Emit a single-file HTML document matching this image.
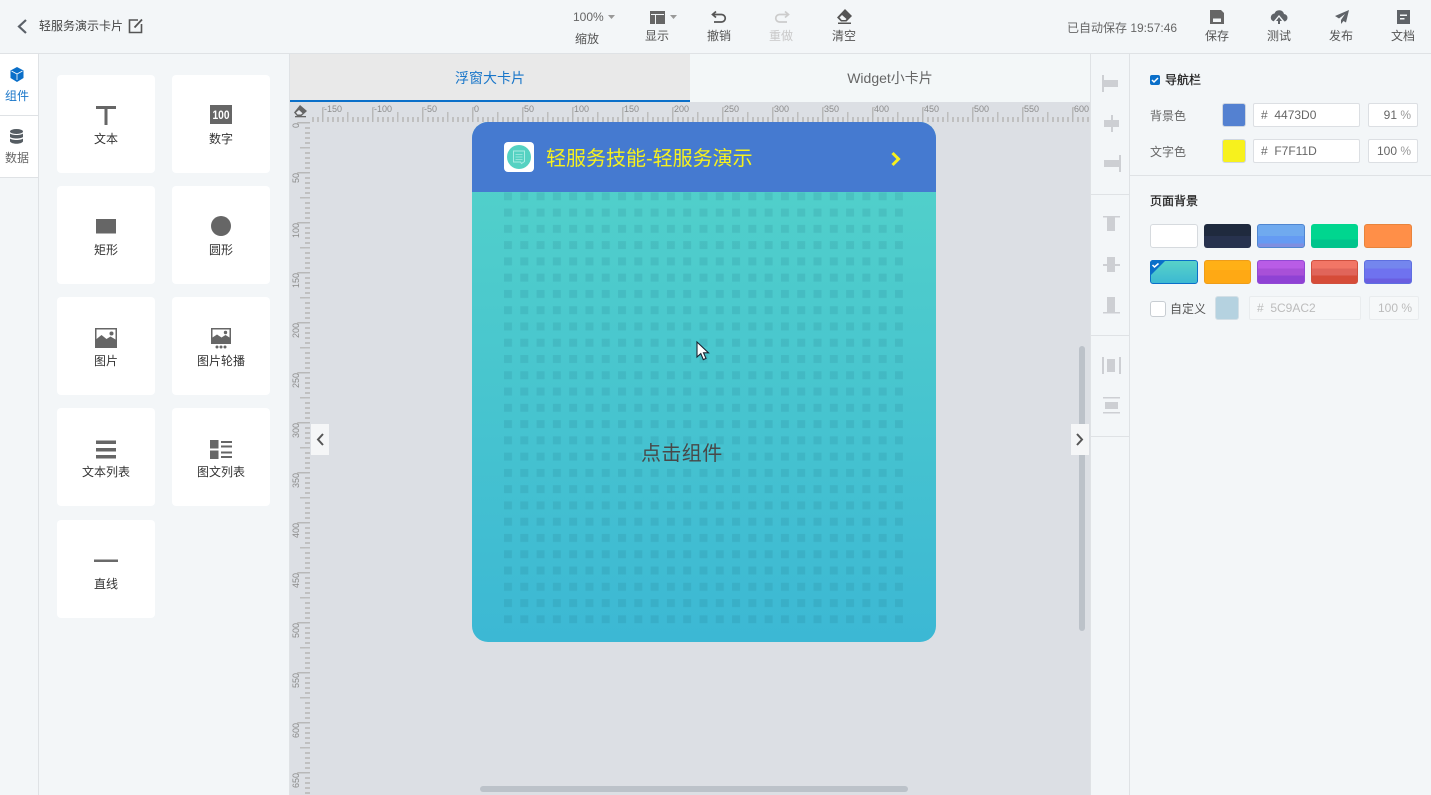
<!DOCTYPE html>
<html lang="zh"><head><meta charset="utf-8"><title>轻服务演示卡片</title>
<style>
*{box-sizing:border-box;margin:0;padding:0}
html,body{width:1431px;height:795px;overflow:hidden;background:#f3f6f8;font-family:"Liberation Sans","Noto Sans CJK SC",sans-serif;font-size:12px;color:#555}
.a{position:absolute}
.t{position:absolute;white-space:nowrap;line-height:16px;font-size:12px}
.c{text-align:center}
svg{position:absolute;overflow:visible}
.card{position:absolute;width:98px;height:98px;background:#fff;border-radius:4px}
.card .t{left:0;width:98px;text-align:center;top:56px;color:#333}
.card svg{left:37px;top:29px}
.box{position:absolute;background:#fff;border:1px solid #dcdfe3;border-radius:2px;height:24px;line-height:22px;font-size:12px;color:#666}
.sw{position:absolute;height:24px;border-radius:3px}
</style></head><body>

<!-- top bar -->
<div class="a" style="left:0;top:0;width:1431px;height:54px;background:#f3f6f8;border-bottom:1px solid #dfe2e5"></div>
<svg style="left:0;top:0" width="40" height="54"><path d="M26 20l-7 6.500 7 6.500" fill="none" stroke="#5a6068" stroke-width="2.200"/></svg>
<div class="t" style="left:39px;top:18px;color:#444">轻服务演示卡片</div>
<svg style="left:128px;top:18px" width="16" height="16"><path d="M10 2H1.500V14.500H13.500V6" fill="none" stroke="#555" stroke-width="1.600"/><path d="M6.500 9.500L14 1.500" stroke="#555" stroke-width="1.800"/></svg>

<div class="t" style="left:573px;top:9px;color:#666">100%</div>
<svg style="left:608px;top:15px" width="7" height="4"><path d="M0 0h7L3.500 4z" fill="#999"/></svg>
<div class="t" style="left:575px;top:31px">缩放</div>
<svg style="left:650px;top:11px" width="15" height="13"><path d="M0 0h15v13H0z" fill="#666"/><path d="M1 3h13v1H1zM5 4h1v9H5z" fill="#f3f6f8"/></svg>
<svg style="left:670px;top:15px" width="7" height="4"><path d="M0 0h7L3.500 4z" fill="#999"/></svg>
<div class="t" style="left:645px;top:28px">显示</div>
<svg style="left:711px;top:10px" width="16" height="15"><path d="M5 1.500L1.500 4.500 5 7.500" fill="none" stroke="#555" stroke-width="1.700"/><path d="M2 4.500H10.500a3.500 3.500 0 0 1 0 7.500H3" fill="none" stroke="#555" stroke-width="1.700"/></svg>
<div class="t" style="left:707px;top:28px">撤销</div>
<svg style="left:774px;top:10px" width="16" height="15"><path d="M11 1.500L14.500 4.500 11 7.500" fill="none" stroke="#ccc" stroke-width="1.700"/><path d="M14 4.500H5.500a3.500 3.500 0 0 0 0 7.500H13" fill="none" stroke="#ccc" stroke-width="1.700"/></svg>
<div class="t" style="left:769px;top:28px;color:#c8c8c8">重做</div>
<svg style="left:836px;top:9px" width="16" height="16"><path d="M9 0L16 7 10.500 12.500H5L1 8.500z" fill="#555"/><path d="M3.500 8.500L6 6l4.500 4-1 1H5.700z" fill="#f3f6f8"/><path d="M2 13.500h13V15H2z" fill="#555"/></svg>
<div class="t" style="left:832px;top:28px">清空</div>

<div class="t" style="left:1067px;top:20px;color:#666">已自动保存 19:57:46</div>
<svg style="left:1210px;top:10px" width="14" height="14"><path d="M0 0h11l3 3v11H0z" fill="#666"/><path d="M3 8.500h8V12H3z" fill="#f3f6f8"/></svg>
<div class="t" style="left:1205px;top:28px">保存</div>
<svg style="left:1271px;top:9px" width="16" height="15"><path d="M4 12.500a4 4 0 0 1-.5-8A5 5 0 0 1 13 5a3.700 3.700 0 0 1-.5 7.500z" fill="#5f6368"/><path d="M8 6l5.500 6.500H2.500z" fill="#f3f6f8"/><path d="M8 8l3 4H9v3H7v-3H5z" fill="#5f6368"/></svg>
<div class="t" style="left:1267px;top:28px">测试</div>
<svg style="left:1334px;top:9px" width="16" height="15"><path d="M15 1L1 7l4 2.500L11 5 7 11v4l2.500-3L12 13.500z" fill="#5f6368"/></svg>
<div class="t" style="left:1329px;top:28px">发布</div>
<svg style="left:1397px;top:10px" width="13" height="14"><path d="M0 0h13v14H0z" fill="#5f6368"/><path d="M3 4.500h7V6H3zM3 8h4.500v1.500H3z" fill="#f3f6f8"/></svg>
<div class="t" style="left:1391px;top:28px">文档</div>

<!-- left nav -->
<div class="a" style="left:0;top:54px;width:38px;height:61px;background:#fff"></div>
<div class="a" style="left:0;top:115px;width:38px;height:1px;background:#dfe2e5"></div>
<div class="a" style="left:0;top:116px;width:38px;height:61px;background:#fff"></div>
<div class="a" style="left:0;top:177px;width:38px;height:1px;background:#dfe2e5"></div>
<div class="a" style="left:38px;top:54px;width:1px;height:741px;background:#dfe2e5"></div>
<svg style="left:10px;top:67px" width="14" height="15"><path d="M7 0l6.500 3.500v7.500L7 15 .5 11V3.500z" fill="#0a6fc9"/><path d="M1.500 4L7 7l5.500-3M7 7v6" fill="none" stroke="#fff" stroke-width=".8"/></svg>
<div class="t" style="left:5px;top:88px;color:#1976c9">组件</div>
<svg style="left:10px;top:129px" width="13" height="15"><ellipse cx="6.500" cy="2.500" rx="6.500" ry="2.500" fill="#555c62"/><path d="M0 4.500c2 2 11 2 13 0V8c-2 2-11 2-13 0zM0 9.500c2 2 11 2 13 0V12.500C11 15.500 2 15.500 0 12.500z" fill="#555c62"/></svg>
<div class="t" style="left:5px;top:150px;color:#666">数据</div>

<!-- component cards -->
<div class="a" style="left:289px;top:54px;width:1px;height:741px;background:#dfe2e5"></div>
<div class="card" style="left:57px;top:75px"><svg width="24" height="24"><path d="M2 2h20v3H13.500V21H10.500V5H2z" fill="#666"/></svg><div class="t">文本</div></div>
<div class="card" style="left:172px;top:75px"><svg width="24" height="24"><path d="M1 1h22v19H1z" fill="#666"/><text x="12" y="15" font-size="12" font-weight="700" fill="#fff" text-anchor="middle" font-family="Liberation Sans Narrow,Liberation Sans,sans-serif" textLength="17" lengthAdjust="spacingAndGlyphs">100</text></svg><div class="t">数字</div></div>
<div class="card" style="left:57px;top:186px"><svg width="24" height="24"><path d="M2 4h20v14.500H2z" fill="#666"/></svg><div class="t">矩形</div></div>
<div class="card" style="left:172px;top:186px"><svg width="24" height="24"><circle cx="12" cy="11" r="10" fill="#666"/></svg><div class="t">圆形</div></div>
<div class="card" style="left:57px;top:297px"><svg width="24" height="24"><path d="M1 2h22v20H1z" fill="#666"/><path d="M2.500 3.500h19v10l-5-3-4 2.500-5-4-5 4z" fill="#fff"/><circle cx="17.500" cy="7.500" r="2" fill="#666"/></svg><div class="t">图片</div></div>
<div class="card" style="left:172px;top:297px"><svg width="24" height="24"><path d="M2 2h20v16H2z" fill="#666"/><path d="M3.500 3.500h17v8l-4-2.500-4 2.500-4.500-3-4.500 3z" fill="#fff"/><circle cx="16.500" cy="6.500" r="1.700" fill="#666"/><circle cx="8" cy="21" r="1.500" fill="#666"/><circle cx="12" cy="21" r="1.500" fill="#666"/><circle cx="16" cy="21" r="1.500" fill="#666"/></svg><div class="t">图片轮播</div></div>
<div class="card" style="left:57px;top:408px"><svg width="24" height="24"><path d="M2 3.500h20V7H2zM2 11h20v3.500H2zM2 18h20v3.500H2z" fill="#666"/></svg><div class="t">文本列表</div></div>
<div class="card" style="left:172px;top:408px"><svg width="24" height="24"><path d="M1 3h8.500v8.500H1zM1 13.500h8.500V22H1z" fill="#666"/><path d="M12 4h11v2H12zM12 8.500h11v2H12zM12 14.500h11v2H12zM12 19h11v2H12z" fill="#666"/></svg><div class="t">图文列表</div></div>
<div class="card" style="left:57px;top:520px"><svg width="24" height="24"><path d="M0 10.500h24v2.500H0z" fill="#6a6a6a"/></svg><div class="t">直线</div></div>

<!-- tabs -->
<div class="a" style="left:290px;top:54px;width:400px;height:46px;background:#e9e9e9"></div>
<div class="a" style="left:690px;top:54px;width:400px;height:48px;background:#f3f7f8"></div>
<div class="a" style="left:290px;top:100px;width:400px;height:2px;background:#0a6fc9"></div>
<div class="t c" style="left:290px;top:70px;width:400px;font-size:14px;color:#1976c9">浮窗大卡片</div>
<div class="t c" style="left:690px;top:70px;width:400px;font-size:14px;color:#666">Widget小卡片</div>

<!-- canvas -->
<div class="a" style="left:290px;top:102px;width:800px;height:693px;background:#dcdfe4"></div>
<svg style="left:290px;top:102px" width="800" height="693">
<defs>
<pattern id="rx" x="182" y="0" width="50" height="20" patternUnits="userSpaceOnUse">
<rect x="0" y="5" width="1.500" height="15" fill="#b8b8b8"/><rect x="0" y="5" width="3" height="1" fill="#c2c2c2"/>
<rect x="25" y="10" width="1.500" height="10" fill="#bdbdbd"/>
<rect x="5" y="15" width="2" height="5" fill="#c0c0c0"/><rect x="10" y="15" width="2" height="5" fill="#c0c0c0"/><rect x="15" y="15" width="2" height="5" fill="#c0c0c0"/><rect x="20" y="15" width="2" height="5" fill="#c0c0c0"/><rect x="30" y="15" width="2" height="5" fill="#c0c0c0"/><rect x="35" y="15" width="2" height="5" fill="#c0c0c0"/><rect x="40" y="15" width="2" height="5" fill="#c0c0c0"/><rect x="45" y="15" width="2" height="5" fill="#c0c0c0"/>
</pattern>
<pattern id="ry" x="0" y="20" width="20" height="50" patternUnits="userSpaceOnUse">
<rect x="7" y="0" width="13" height="1.500" fill="#b8b8b8"/><rect x="7" y="0" width="1" height="3" fill="#c2c2c2"/>
<rect x="10" y="25" width="10" height="1.500" fill="#bdbdbd"/>
<rect x="15" y="5" width="5" height="2" fill="#c0c0c0"/><rect x="15" y="10" width="5" height="2" fill="#c0c0c0"/><rect x="15" y="15" width="5" height="2" fill="#c0c0c0"/><rect x="15" y="20" width="5" height="2" fill="#c0c0c0"/><rect x="15" y="30" width="5" height="2" fill="#c0c0c0"/><rect x="15" y="35" width="5" height="2" fill="#c0c0c0"/><rect x="15" y="40" width="5" height="2" fill="#c0c0c0"/><rect x="15" y="45" width="5" height="2" fill="#c0c0c0"/>
</pattern>
</defs>
<rect x="20" y="0" width="780" height="20" fill="url(#rx)"/>
<rect x="0" y="20" width="20" height="673" fill="url(#ry)"/>
<g font-size="9" fill="#8c8c8c" font-family="Liberation Sans,sans-serif">
<text x="34" y="10">-150</text><text x="84" y="10">-100</text><text x="134" y="10">-50</text><text x="184" y="10">0</text><text x="234" y="10">50</text><text x="284" y="10">100</text><text x="334" y="10">150</text><text x="384" y="10">200</text><text x="434" y="10">250</text><text x="484" y="10">300</text><text x="534" y="10">350</text><text x="584" y="10">400</text><text x="634" y="10">450</text><text x="684" y="10">500</text><text x="734" y="10">550</text><text x="784" y="10">600</text>
<g text-anchor="end">
<text transform="translate(9,21) rotate(-90)">0</text>
<text transform="translate(9,71) rotate(-90)">50</text>
<text transform="translate(9,121) rotate(-90)">100</text>
<text transform="translate(9,171) rotate(-90)">150</text>
<text transform="translate(9,221) rotate(-90)">200</text>
<text transform="translate(9,271) rotate(-90)">250</text>
<text transform="translate(9,321) rotate(-90)">300</text>
<text transform="translate(9,371) rotate(-90)">350</text>
<text transform="translate(9,421) rotate(-90)">400</text>
<text transform="translate(9,471) rotate(-90)">450</text>
<text transform="translate(9,521) rotate(-90)">500</text>
<text transform="translate(9,571) rotate(-90)">550</text>
<text transform="translate(9,621) rotate(-90)">600</text>
<text transform="translate(9,671) rotate(-90)">650</text>
</g></g>
<path d="M10 3l7 6-5.500 5H7L4 10.500z" fill="#666"/><path d="M6 10.500l3-2.500 3.500 3.200-1.500 1.300H7.500z" fill="#e8eaee"/><path d="M5 14h11v1.300H5z" fill="#666"/>
</svg>

<!-- card -->
<div class="a" style="left:472px;top:122px;width:464px;height:520px;border-radius:16px;overflow:hidden;background:linear-gradient(#54d3c9,#3cb8d4)">
<div class="a" style="left:0;top:0;width:464px;height:70px;background:#457ad0"></div>
<svg style="left:0;top:0" width="464" height="520">
<defs><pattern id="dot" x="32" y="70.300" width="16.290" height="16.270" patternUnits="userSpaceOnUse"><rect width="8" height="8" fill="#1a6a80" fill-opacity=".14"/></pattern></defs>
<rect x="32" y="70.300" width="399" height="431" fill="url(#dot)"/>
<rect x="32" y="20" width="30" height="30" rx="4" fill="#fff"/>
<circle cx="47" cy="35" r="12" fill="#55d2c2"/>
<path d="M41.500 29h11v10.500l-3 2-1-1.500H41.500z" fill="none" stroke="#a9ece3" stroke-width="1"/>
<path d="M43.500 32.500h7M43.500 35h7M43.500 37.500h7" stroke="#a9ece3" stroke-width=".8"/>
<path d="M420.500 31l6 6-6 6" fill="none" stroke="#f7f11d" stroke-width="3"/>
</svg>
<div class="t" style="left:74px;top:24px;font-size:20px;line-height:27px;color:#f7f11d">轻服务技能-轻服务演示</div>
<div class="t" style="left:169px;top:319px;font-size:20px;line-height:27px;letter-spacing:.4px;color:#484848">点击组件</div>
</div>

<!-- cursor -->
<svg style="left:696px;top:341px" width="14" height="21"><path d="M1 1v15l3.800-3.400 2.500 6 2.700-1.200-2.500-5.600H12.500z" fill="#fff" stroke="#1a2230" stroke-width="1.100"/></svg>

<!-- scrollbars / toggles -->
<div class="a" style="left:1079px;top:346px;width:6px;height:285px;border-radius:3px;background:#bcc2c9"></div>
<div class="a" style="left:480px;top:786px;width:428px;height:6px;border-radius:3px;background:#bcc2c9"></div>
<div class="a" style="left:311px;top:424px;width:18px;height:31px;background:#f5f6f7"></div>
<svg style="left:311px;top:424px" width="18" height="31"><path d="M12 10l-5 5.500 5 5.500" fill="none" stroke="#555" stroke-width="2"/></svg>
<div class="a" style="left:1071px;top:424px;width:18px;height:31px;background:#f5f6f7"></div>
<svg style="left:1071px;top:424px" width="18" height="31"><path d="M6 10l5 5.500-5 5.500" fill="none" stroke="#555" stroke-width="2"/></svg>

<!-- align bar -->
<div class="a" style="left:1090px;top:54px;width:1px;height:741px;background:#dfe2e5"></div>
<div class="a" style="left:1129px;top:54px;width:1px;height:741px;background:#dfe2e5"></div>
<div class="a" style="left:1091px;top:194px;width:38px;height:1px;background:#dfe2e5"></div>
<div class="a" style="left:1091px;top:335px;width:38px;height:1px;background:#dfe2e5"></div>
<div class="a" style="left:1091px;top:436px;width:38px;height:1px;background:#dfe2e5"></div>
<svg style="left:1091px;top:54px" width="38" height="370" fill="#cdcfd3">
<path d="M11 21h2v17h-2zM13 26h14v7H13z"/>
<path d="M20 61h2v17h-2zM13 66h15v7H13z"/>
<path d="M28 101h2v17h-2zM13 106h15v7H13z"/>
<path d="M12 162h17v1.500H12zM16 163.500h8V177h-8z"/>
<path d="M12 210h17v2H12zM16 203h8v15h-8z"/>
<path d="M12 258h17v1.500H12zM16 243h8v15h-8z"/>
<path d="M11 303h2v17h-2zM28 303h2v17h-2zM16 305h8v13h-8z"/>
<path d="M12 343h17v1.500H12zM12 358h17v1.500H12zM14 348h13v7H14z"/>
</svg>

<!-- right panel -->
<div class="a" style="left:1130px;top:175px;width:301px;height:1px;background:#dfe2e5"></div>
<div class="a" style="left:1150px;top:75px;width:10px;height:10px;background:#0a6fc9;border-radius:2px"></div>
<svg style="left:1150px;top:75px" width="10" height="10"><path d="M2 5l2 2 4-4" fill="none" stroke="#fff" stroke-width="1.500"/></svg>
<div class="t" style="left:1165px;top:72px;color:#222;-webkit-text-stroke:.25px #222">导航栏</div>
<div class="t" style="left:1150px;top:108px;color:#666">背景色</div>
<div class="a" style="left:1222px;top:103px;width:24px;height:24px;background:#5481d1;border:1px solid #cfd6e0;border-radius:3px"></div>
<div class="box" style="left:1253px;top:103px;width:107px;padding-left:7px">#&nbsp; 4473D0</div>
<div class="box" style="left:1368px;top:103px;width:50px;text-align:right;padding-right:6px">91 <span style="color:#999">%</span></div>
<div class="t" style="left:1150px;top:144px;color:#666">文字色</div>
<div class="a" style="left:1222px;top:139px;width:24px;height:24px;background:#f7f11d;border:1px solid #cfd6e0;border-radius:3px"></div>
<div class="box" style="left:1253px;top:139px;width:107px;padding-left:7px">#&nbsp; F7F11D</div>
<div class="box" style="left:1368px;top:139px;width:50px;text-align:right;padding-right:6px">100 <span style="color:#999">%</span></div>

<div class="t" style="left:1150px;top:193px;color:#222;-webkit-text-stroke:.25px #222">页面背景</div>
<div class="sw" style="left:1150px;top:224px;width:48px;background:#fff;border:1px solid #d6dade"></div>
<div class="sw" style="left:1204px;top:224px;width:47px;background:linear-gradient(#1f2a3e 0 50%,#27324e 50%)"></div>
<div class="sw" style="left:1257px;top:224px;width:48px;background:linear-gradient(#70aaef 0 50%,#659bf3 50% 85%,#7f8fe0 85%);border:1px solid #4f86d0"></div>
<div class="sw" style="left:1311px;top:224px;width:47px;background:linear-gradient(#00d68f 0 65%,#00c48c 65%)"></div>
<div class="sw" style="left:1364px;top:224px;width:48px;background:#ff8f48;border:1px solid #e8843c"></div>
<div class="sw" style="left:1150px;top:260px;width:48px;background:linear-gradient(#58d2c8,#3cb9d2);border:1px solid #0a6fc9"></div>
<svg style="left:1150px;top:260px" width="16" height="16"><path d="M3 0h13L0 16V3a3 3 0 0 1 3-3z" fill="#0a6fc9"/><path d="M2.500 5l2 2 4-3.500" fill="none" stroke="#fff" stroke-width="1.500"/></svg>
<div class="sw" style="left:1204px;top:260px;width:47px;background:linear-gradient(#ffb016 0 40%,#ffa914 40%);border:1px solid #ee9d1a"></div>
<div class="sw" style="left:1257px;top:260px;width:48px;background:linear-gradient(#b95ce6 0 35%,#a850d8 35% 65%,#8f42d4 65%);border:1px solid #9249d4"></div>
<div class="sw" style="left:1311px;top:260px;width:47px;background:linear-gradient(#f27666 0 35%,#e0655a 35% 65%,#d64c38 65%);border:1px solid #d0503f"></div>
<div class="sw" style="left:1364px;top:260px;width:48px;background:linear-gradient(#7486ee 0 35%,#6f72ef 35% 80%,#6a5ee0 80%);border:1px solid #5e6fe0"></div>

<div class="a" style="left:1150px;top:301px;width:16px;height:16px;background:#fff;border:1px solid #c8cdd2;border-radius:3px"></div>
<div class="t" style="left:1170px;top:301px;color:#555">自定义</div>
<div class="a" style="left:1215px;top:296px;width:24px;height:24px;background:#b5d2e0;border:1px solid #d3dfe6;border-radius:3px"></div>
<div class="box" style="left:1249px;top:296px;width:112px;padding-left:7px;background:#f6f8f9;border-color:#e9ecee;color:#bcbcbc">#&nbsp; 5C9AC2</div>
<div class="box" style="left:1369px;top:296px;width:50px;text-align:right;padding-right:6px;background:#f6f8f9;border-color:#e9ecee;color:#bcbcbc">100 %</div>
</body></html>
